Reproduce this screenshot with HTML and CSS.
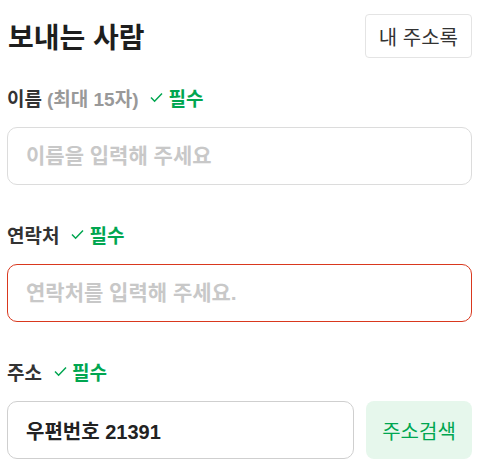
FILE: index.html
```html
<!DOCTYPE html>
<html lang="ko">
  <head>
    <meta charset="UTF-8" />
    <meta name="viewport" content="width=device-width,initial-scale=1.0" />
    <title>보내는 사람</title>
    <link rel="stylesheet" href="styles.css">
  </head>
  <body>
    <div class="sender">
      <div class="sender-head">
        <h2>보내는 사람</h2>
        <button type="button" class="book-btn">내 주소록</button>
      </div>

      <div class="field">
        <label for="name">이름 <span class="hint">(최대 15자)</span>
          <span class="req">
            <svg width="13" height="13" viewBox="0 0 13 13"><path d="M1 6.5 L4.6 10.2 L12 2.6" fill="none" stroke="#00a650" stroke-width="1.5"/></svg>
            필수
          </span>
        </label>
        <input type="text" id="name" placeholder="이름을 입력해 주세요" />
      </div>

      <div class="field">
        <label for="phone">연락처
          <span class="req">
            <svg width="13" height="13" viewBox="0 0 13 13"><path d="M1 6.5 L4.6 10.2 L12 2.6" fill="none" stroke="#00a650" stroke-width="1.5"/></svg>
            필수
          </span>
        </label>
        <input type="text" id="phone" class="error" placeholder="연락처를 입력해 주세요." />
      </div>

      <div class="field">
        <label for="zip">주소
          <span class="req">
            <svg width="13" height="13" viewBox="0 0 13 13"><path d="M1 6.5 L4.6 10.2 L12 2.6" fill="none" stroke="#00a650" stroke-width="1.5"/></svg>
            필수
          </span>
        </label>
        <div class="zip-row">
          <input type="text" id="zip" value="우편번호 21391" readonly />
          <button type="button" class="search-btn">주소검색</button>
        </div>
      </div>
    </div>
  </body>
</html>
```

FILE: styles.css
```css
* {
  margin: 0;
  padding: 0;
  box-sizing: border-box;
}
html, body {
  font-family: "Liberation Sans", "Noto Sans CJK KR", sans-serif;
  background: #fff;
  color: #222;
}
.sender {
  padding: 14px 10px 0 7px;
}
.sender-head {
  display: flex;
  align-items: center;
  justify-content: space-between;
}
.sender-head h2 {
  font-size: 28px;
  font-weight: 700;
  color: #1e1e1e;
  padding-left: 1px;
}
.book-btn {
  font-family: inherit;
  height: 44px;
  padding: 0 13px;
  background: #fff;
  border: 1px solid #e4e4e4;
  border-radius: 4px;
  font-size: 20px;
  color: #333;
}
.field {
  margin-top: 27px;
}
.field + .field {
  margin-top: 37px;
}
label {
  display: flex;
  align-items: center;
  height: 24px;
  margin-bottom: 18px;
  font-size: 19px;
  font-weight: 700;
  color: #333;
}
.hint {
  color: #999;
  margin-left: 5px;
}
.req {
  display: inline-flex;
  align-items: center;
  gap: 5px;
  margin-left: 12px;
  color: #00a650;
  font-size: 19px;
}
input {
  width: 100%;
  height: 58px;
  padding: 0 18px;
  border: 1px solid #dcdcdc;
  border-radius: 10px;
  font-family: inherit;
  font-size: 21px;
  font-weight: 700;
  color: #222;
  outline: none;
}
input::placeholder {
  color: #c8c8c8;
}
input.error {
  border-color: #d9381e;
}
.zip-row {
  display: flex;
  gap: 12px;
}
.zip-row input {
  flex: 1;
  border-color: #cfcfcf;
  font-size: 20px;
}
.search-btn {
  font-family: inherit;
  width: 106px;
  height: 58px;
  border: none;
  border-radius: 8px;
  background: #e6f7ec;
  color: #00a650;
  font-size: 20px;
}
```
